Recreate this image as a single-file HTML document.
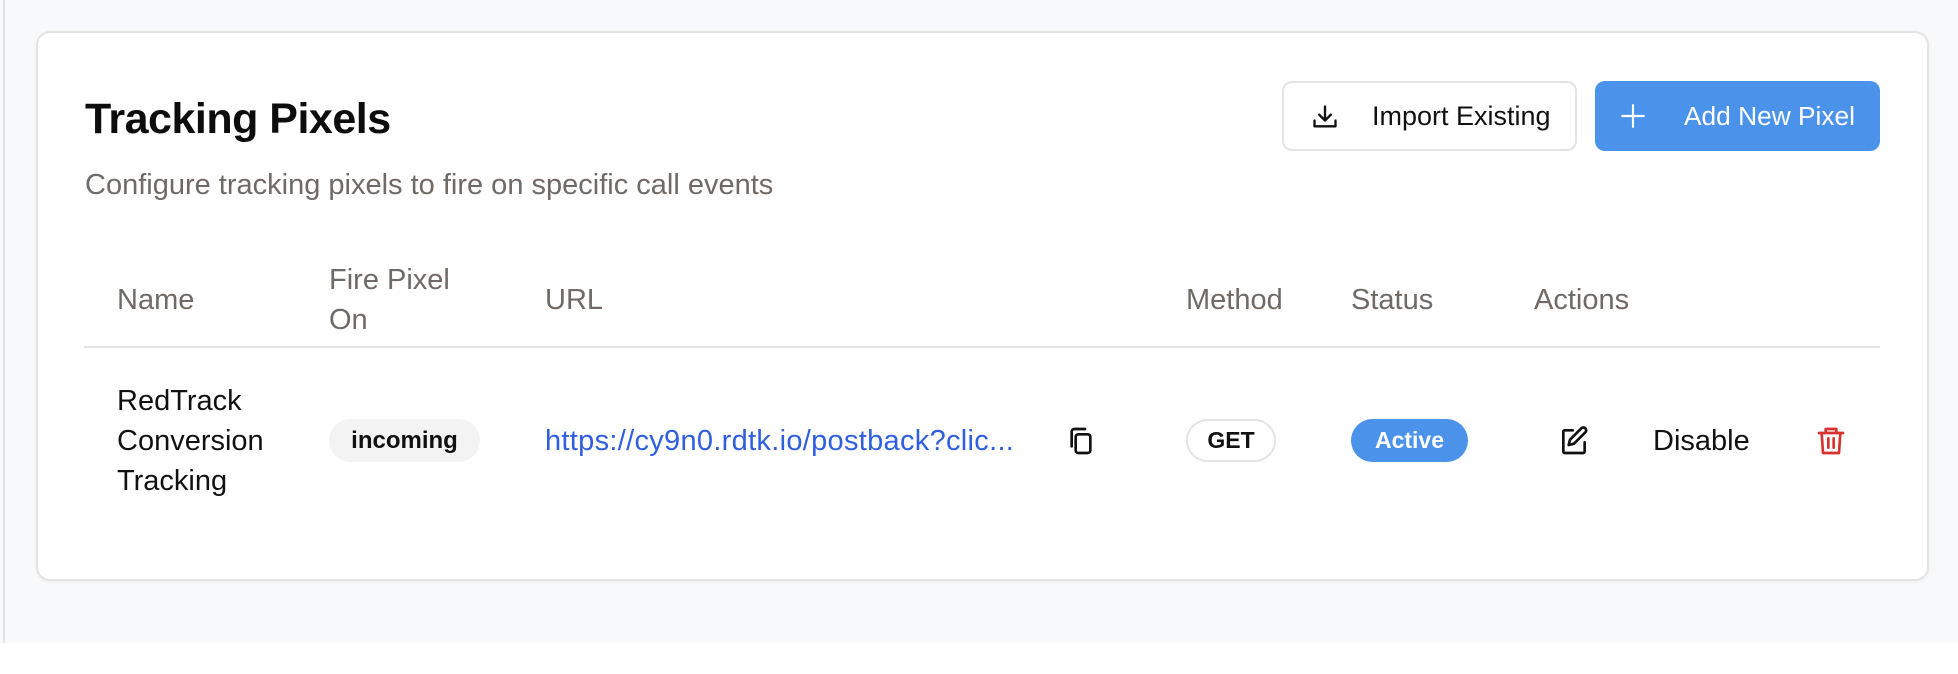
<!DOCTYPE html>
<html><head><meta charset="utf-8"><style>
*{margin:0;padding:0;box-sizing:border-box}
body{width:1958px;height:674px;background:#fff;font-family:"Liberation Sans",sans-serif;position:relative;overflow:hidden}
.pg{position:absolute;left:0;top:0;width:1958px;height:643px;background:#f8f9fa}
.vl{position:absolute;left:3px;top:0;width:2px;height:643px;background:#e4e4e4}
.card{position:absolute;left:36px;top:31px;width:1893px;height:550px;background:#fff;border:2px solid #e6e4e2;border-radius:14px;box-shadow:0 1px 3px rgba(0,0,0,.05)}
.a{position:absolute;white-space:nowrap}
h1{position:absolute;left:85px;top:95px;font-size:43px;font-weight:bold;color:#0d0d0d;letter-spacing:-0.5px}
.sub{left:85px;top:169px;font-size:29px;color:#6f6a66}
.th{font-size:29px;color:#6f6a66;line-height:40px}
.td{font-size:29px;color:#111;line-height:40px}
.btn{position:absolute;top:81px;height:70px;border-radius:10px;font-size:27px;display:flex;align-items:center}
.pill{position:absolute;top:419px;height:43px;border-radius:22px;font-size:23px;font-weight:bold;display:flex;align-items:center;justify-content:center}
</style></head><body>
<div class="pg"></div><div class="vl"></div>
<div class="card"></div>
<h1>Tracking Pixels</h1>
<div class="a sub">Configure tracking pixels to fire on specific call events</div>

<div class="btn" style="left:1282px;width:295px;background:#fff;border:2px solid #e4e4e4;color:#111">
<svg style="position:absolute;left:27px;top:20px" width="28" height="28" viewBox="0 0 24 24" fill="none" stroke="#111" stroke-width="2" stroke-linecap="round" stroke-linejoin="round"><path d="M12 3v12M7 10l5 5 5-5M3 15v5h18v-5"/></svg>
<span class="a" style="left:88px">Import Existing</span></div>
<div class="btn" style="left:1595px;width:285px;background:#4a92ea;color:#fff;font-size:26.3px">
<svg style="position:absolute;left:25px;top:22px" width="26" height="26" viewBox="0 0 24 24" fill="none" stroke="#fff" stroke-width="2" stroke-linecap="round"><path d="M12 2v20M2 12h20"/></svg>
<span class="a" style="left:89px">Add New Pixel</span></div>

<div class="a th" style="left:117px;top:280px">Name</div>
<div class="a th" style="left:329px;top:260px">Fire Pixel<br>On</div>
<div class="a th" style="left:545px;top:280px">URL</div>
<div class="a th" style="left:1186px;top:280px">Method</div>
<div class="a th" style="left:1351px;top:280px">Status</div>
<div class="a th" style="left:1534px;top:280px">Actions</div>
<div class="a" style="left:84px;top:346px;width:1796px;height:2px;background:#e4e4e4"></div>

<div class="a td" style="left:117px;top:381px">RedTrack<br>Conversion<br>Tracking</div>
<div class="pill" style="left:329px;width:151px;background:#f3f3f3;color:#111;font-size:24px">incoming</div>
<div class="a td" style="left:545px;top:421px;color:#2f5fe0;letter-spacing:0.3px">https://cy9n0.rdtk.io/postback?clic...</div>
<svg class="a" style="left:1065px;top:425px" width="32" height="32" viewBox="0 0 24 24" fill="none" stroke="#111" stroke-width="2" stroke-linejoin="round" stroke-linecap="round"><rect x="8" y="7" width="11" height="14" rx="2"/><path d="M5 16V5a2 2 0 0 1 2-2h8"/></svg>
<div class="pill" style="left:1186px;width:90px;background:#fff;border:2px solid #e4e4e4;color:#111">GET</div>
<div class="pill" style="left:1351px;width:117px;background:#4a92ea;color:#fff">Active</div>
<svg class="a" style="left:1558px;top:425px" width="32" height="32" viewBox="0 0 24 24" fill="none" stroke="#111" stroke-width="2" stroke-linejoin="round" stroke-linecap="round"><path d="M11 4H5a1 1 0 0 0-1 1v15a1 1 0 0 0 1 1h14a1 1 0 0 0 1-1v-7"/><path d="M17.5 2.5a2.1 2.1 0 0 1 3 3L12 14l-4 1 1-4z"/></svg>
<div class="a td" style="left:1653px;top:421px">Disable</div>
<svg class="a" style="left:1815px;top:425px" width="32" height="32" viewBox="0 0 24 24" fill="none" stroke="#d8322e" stroke-width="2" stroke-linejoin="round" stroke-linecap="round"><path d="M3 6h18M8 6V3h8v3M5 6l1 15h12l1-15M10 10v7M14 10v7"/></svg>
</body></html>
